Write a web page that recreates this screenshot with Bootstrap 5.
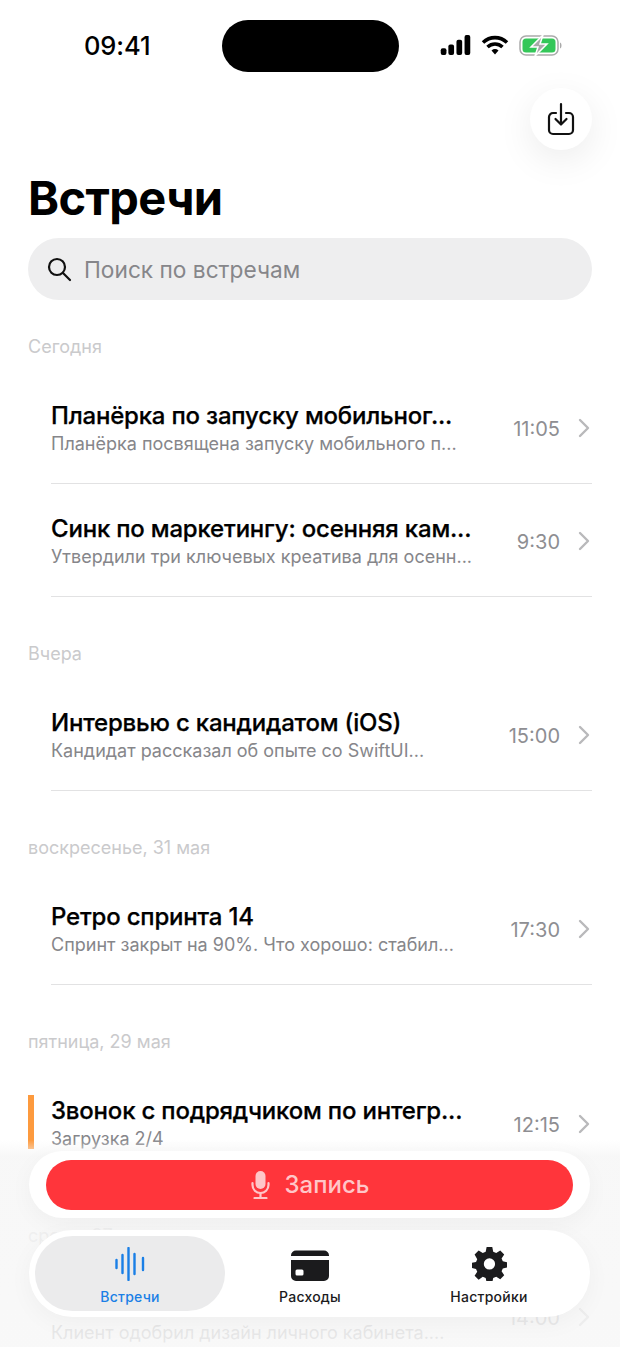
<!DOCTYPE html>
<html lang="ru">
<head>
    <meta charset="UTF-8">
    <meta name="viewport" content="width=device-width, initial-scale=1.0">
    <title>Встречи</title>
    <link rel="stylesheet" href="https://cdn.jsdelivr.net/npm/bootstrap@5.3.0/dist/css/bootstrap.min.css">
    <style>
        body { background: #fff; font-family: Inter, "Liberation Sans", sans-serif; color: #000; }
        .phone { width: 620px; height: 1347px; overflow: hidden; position: relative; background: #fff; }

        .status-row { height: 92px; padding: 20px 28px 0 84px; }
        .status-time { font-size: 25.5px; font-weight: 500; letter-spacing: -.1px; width: 138px; line-height: 51px; }
        .island { width: 177px; height: 52px; border-radius: 26px; background: #000; }
        .status-icons { margin-left: 41px; gap: 10px; height: 50px; }

        .share-btn { width: 62px; height: 62px; border-radius: 50%; background: #fff; box-shadow: 0 10px 36px rgba(0,0,0,.08); position: absolute; left: 530px; top: 88px; }

        .page-title { font-size: 47px; font-weight: 700; letter-spacing: -.6px; line-height: 56px; margin: 78px 0 0 28px; }
        .search-box { margin: 12px 28px 0; height: 62px; border-radius: 31px; background: #eeeeef; padding-left: 19px; gap: 12px; }
        .search-box span { font-size: 22.7px; color: #86868a; padding-top: 2px; }

        .day-label { font-size: 18px; line-height: 22px; color: #cacacc; margin: 0 0 14px 28px; white-space: nowrap; padding-top: 1px; height: 22px; }
        .day-group { margin-top: 45px; }
        .day-group.first-group { margin-top: 35px; }

        .meet-row { height: 113px; margin-left: 51px; margin-right: 28px; border-bottom: 1px solid #e2e2e3; position: relative; padding-right: 2px; }
        .meet-text { min-width: 0; width: 426px; padding-top: 30px; }
        .meet-name { font-size: 24px; font-weight: 500; line-height: 30px; letter-spacing: -.2px; white-space: nowrap; -webkit-text-stroke: .25px #000; }
        .meet-sub { font-size: 18px; line-height: 26px; color: #86868a; white-space: nowrap; }
        .meet-time { font-size: 20px; color: #8e8e92; margin-left: auto; margin-right: 18px; padding-top: 4px; }
        .meet-chev { align-self: center; margin-top: 2px; }
        .meet-row.loading { border-bottom: 0; }
        .load-mark { position: absolute; left: -23px; top: 29px; width: 6px; height: 54px; background: #fd9a3e; }

        .bottom-fade { position: absolute; left: 0; right: 0; top: 1140px; bottom: 0; background: linear-gradient(rgba(255,255,255,0), rgba(246,246,246,.82) 8%, rgba(247,247,247,.86) 100%); }
        .record-wrap { position: absolute; left: 29px; top: 1151px; width: 561px; height: 67px; border-radius: 34px; background: #fff; padding: 9px 17px; box-shadow: 0 6px 24px rgba(0,0,0,.04); }
        .record-btn { height: 50px; width: 100%; border: 0; border-radius: 25px; background: #ff353b; color: #ffc6c8; font-size: 24px; font-weight: 500; gap: 15px; padding: 0 0 0 1px; }
        .tabs-wrap { position: absolute; left: 29px; top: 1230px; width: 561px; height: 87px; border-radius: 44px; background: #fff; padding: 6px; box-shadow: 0 6px 24px rgba(0,0,0,.04); }
        .tab-item { flex: 0 0 188px; height: 75px; border-radius: 38px; font-size: 14px; font-weight: 500; color: #1b1b1d; padding-top: 11px; gap: 5px; letter-spacing: .25px; }
        .tab-item.active { flex-basis: 190px; background: #ebebec; color: #1a7fe6; }
        .tab-item.middle { flex-basis: 170px; }
        .tab-item svg { display: block; }
    </style>
</head>
<body>
<div class="phone">

    <!-- Статус бар -->
    <div class="status-row d-flex align-items-start">
        <div class="status-time">09:41</div>
        <div class="island"></div>
        <div class="status-icons d-flex align-items-center">
            <svg width="31" height="20" viewBox="0 0 31 21"><rect x="0" y="14" width="6" height="7" rx="2"/><rect x="8" y="10" width="6" height="11" rx="2"/><rect x="16.500" y="5" width="6" height="16" rx="2"/><rect x="25" y="0" width="6" height="21" rx="2"/></svg>
            <svg width="28" height="20" viewBox="0 0 28 20"><path d="M2 7.500C9 1 19 1 26 7.500M6.500 12C11 8 17 8 21.500 12" fill="none" stroke="#000" stroke-width="3.600"/><path d="M10.500 15.500q3.500-2.800 7 0L14 19.500z"/></svg>
            <svg width="44" height="21" viewBox="0 0 44 21"><rect x="1" y="1" width="38" height="19" rx="6" fill="#fff" stroke="#aaa" stroke-width="1.500"/><rect x="3.500" y="3.500" width="33" height="14" rx="3.500" fill="#34c759"/><path d="M41 7.500c2 .5 2 5.500 0 6z" fill="#aaa"/><path d="M24 0L12 12h7l-3 9 12-12h-7z" fill="#a9a9a9" stroke="#fff" stroke-width="1.500"/></svg>
        </div>
    </div>

    <div class="share-btn d-flex align-items-center justify-content-center">
        <svg width="28" height="34" viewBox="0 0 28 34" fill="none" stroke="#111" stroke-width="2.200" stroke-linecap="round" stroke-linejoin="round"><path d="M9 11H6a4 4 0 0 0-4 4v13a4 4 0 0 0 4 4h16a4 4 0 0 0 4-4V15a4 4 0 0 0-4-4h-3"/><path d="M14 2v20M8.500 17l5.500 5.500 5.500-5.500"/></svg>
    </div>

    <h1 class="page-title">Встречи</h1>

    <div class="search-box d-flex align-items-center">
        <svg width="25" height="25" viewBox="0 0 25 25" fill="none" stroke="#111" stroke-width="2.200" stroke-linecap="round"><circle cx="10" cy="10" r="8"/><path d="M16 16l7 7"/></svg>
        <span>Поиск по встречам</span>
    </div>

    <div class="day-group first-group">
        <div class="day-label">Сегодня</div>
        <div class="meet-row d-flex">
            <div class="meet-text">
                <div class="meet-name">Планёрка по запуску мобильног...</div>
                <div class="meet-sub">Планёрка посвящена запуску мобильного п...</div>
            </div>
            <div class="meet-time align-self-center">11:05</div>
            <svg class="meet-chev" width="12" height="20" viewBox="0 0 12 20" fill="none" stroke="#b9b9bb" stroke-width="2.400" stroke-linecap="round" stroke-linejoin="round"><path d="M2 2l8 8-8 8"/></svg>
        </div>
        <div class="meet-row d-flex">
            <div class="meet-text">
                <div class="meet-name">Синк по маркетингу: осенняя кам...</div>
                <div class="meet-sub">Утвердили три ключевых креатива для осенн...</div>
            </div>
            <div class="meet-time align-self-center">9:30</div>
            <svg class="meet-chev" width="12" height="20" viewBox="0 0 12 20" fill="none" stroke="#b9b9bb" stroke-width="2.400" stroke-linecap="round" stroke-linejoin="round"><path d="M2 2l8 8-8 8"/></svg>
        </div>
    </div>

    <div class="day-group">
        <div class="day-label">Вчера</div>
        <div class="meet-row d-flex">
            <div class="meet-text">
                <div class="meet-name">Интервью с кандидатом (iOS)</div>
                <div class="meet-sub">Кандидат рассказал об опыте со SwiftUI...</div>
            </div>
            <div class="meet-time align-self-center">15:00</div>
            <svg class="meet-chev" width="12" height="20" viewBox="0 0 12 20" fill="none" stroke="#b9b9bb" stroke-width="2.400" stroke-linecap="round" stroke-linejoin="round"><path d="M2 2l8 8-8 8"/></svg>
        </div>
    </div>

    <div class="day-group">
        <div class="day-label">воскресенье, 31 мая</div>
        <div class="meet-row d-flex">
            <div class="meet-text">
                <div class="meet-name">Ретро спринта 14</div>
                <div class="meet-sub">Спринт закрыт на 90%. Что хорошо: стабил...</div>
            </div>
            <div class="meet-time align-self-center">17:30</div>
            <svg class="meet-chev" width="12" height="20" viewBox="0 0 12 20" fill="none" stroke="#b9b9bb" stroke-width="2.400" stroke-linecap="round" stroke-linejoin="round"><path d="M2 2l8 8-8 8"/></svg>
        </div>
    </div>

    <div class="day-group">
        <div class="day-label">пятница, 29 мая</div>
        <div class="meet-row loading d-flex">
            <div class="load-mark"></div>
            <div class="meet-text">
                <div class="meet-name">Звонок с подрядчиком по интегр...</div>
                <div class="meet-sub">Загрузка 2/4</div>
            </div>
            <div class="meet-time align-self-center">12:15</div>
            <svg class="meet-chev" width="12" height="20" viewBox="0 0 12 20" fill="none" stroke="#b9b9bb" stroke-width="2.400" stroke-linecap="round" stroke-linejoin="round"><path d="M2 2l8 8-8 8"/></svg>
        </div>
    </div>

    <div class="day-group">
        <div class="day-label">среда, 27 мая</div>
        <div class="meet-row d-flex">
            <div class="meet-text">
                <div class="meet-name">&nbsp;</div>
                <div class="meet-sub">Клиент одобрил дизайн личного кабинета....</div>
            </div>
            <div class="meet-time align-self-center">14:00</div>
            <svg class="meet-chev" width="12" height="20" viewBox="0 0 12 20" fill="none" stroke="#b9b9bb" stroke-width="2.400" stroke-linecap="round" stroke-linejoin="round"><path d="M2 2l8 8-8 8"/></svg>
        </div>
    </div>

    <div class="bottom-fade"></div>

    <!-- Кнопка записи -->
    <div class="record-wrap">
        <button type="button" class="btn record-btn d-flex align-items-center justify-content-center">
            <svg width="19" height="28" viewBox="0 0 19 28" fill="#ffc6c8"><rect x="4.500" y="0" width="10" height="18" rx="5"/><path d="M1.500 12v2a8 8 0 0 0 16 0v-2" fill="none" stroke="#ffc6c8" stroke-width="2.200" stroke-linecap="round"/><path d="M9.500 22v4M3.500 27h12" fill="none" stroke="#ffc6c8" stroke-width="2.200" stroke-linecap="round"/></svg>
            <span>Запись</span>
        </button>
    </div>

    <!-- Таб бар -->
    <div class="tabs-wrap d-flex">
        <div class="tab-item active d-flex flex-column align-items-center">
            <svg width="30" height="34" viewBox="0 0 30 34" fill="none" stroke="#1a7fe6" stroke-width="2.400" stroke-linecap="round"><path d="M1.500 13v8M7.500 8v18M13.500 1v32M19.500 7v20M28 11v12"/></svg>
            <span>Встречи</span>
        </div>
        <div class="tab-item middle d-flex flex-column align-items-center">
            <svg width="38" height="34" viewBox="0 0 38 34"><path fill="#1b1b1d" fill-rule="evenodd" d="M5 3.500h28a5 5 0 0 1 5 5V9H0v-.500a5 5 0 0 1 5-5zM0 13h38v16a5 5 0 0 1-5 5H5a5 5 0 0 1-5-5zM6 22.500a1.500 1.500 0 0 0-1.500 1.500v3A1.500 1.500 0 0 0 6 28.500h5a1.500 1.500 0 0 0 1.500-1.500v-3a1.500 1.500 0 0 0-1.500-1.500z"/></svg>
            <span>Расходы</span>
        </div>
        <div class="tab-item d-flex flex-column align-items-center">
            <svg width="35" height="34" viewBox="0 0 35 34"><path fill="#1b1b1d" fill-rule="evenodd" d="M14.500 0h6l1 5 3.200 1.400L29 3.600l4.200 4.300-2.800 4.300 1.300 3 5 1v5.600l-5 1-1.300 3.100 2.800 4.200-4.200 4.300-4.300-2.800-3.200 1.300-1 5h-6l-1-5-3.100-1.300L6 34.900l-4.300-4.300 2.800-4.200-1.300-3.100-5-1V17l5-1 1.300-3L1.700 7.900 6 3.600l4.400 2.800 3.100-1.400zM17.500 12a6 6 0 1 0 0 12 6 6 0 0 0 0-12z" transform="translate(1 0) scale(.94)"/></svg>
            <span>Настройки</span>
        </div>
    </div>

</div>
<script src="https://cdn.jsdelivr.net/npm/bootstrap@5.3.0/dist/js/bootstrap.bundle.min.js"></script>
</body>
</html>
